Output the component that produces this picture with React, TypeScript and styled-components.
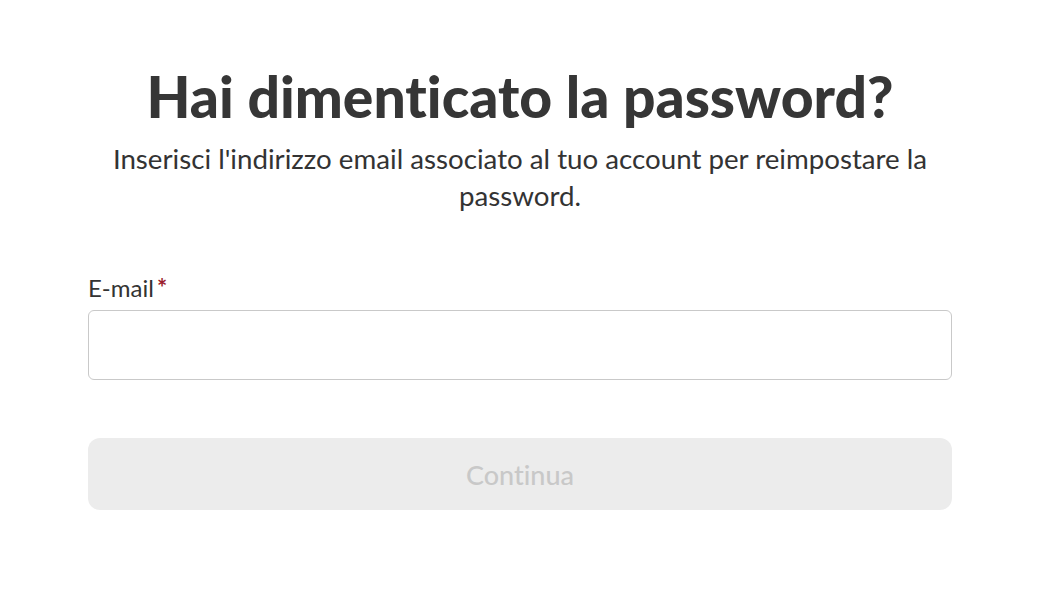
import React from "react";
import styled, { createGlobalStyle } from "styled-components";

const Global = createGlobalStyle`
  html, body { margin: 0; padding: 0; background: #ffffff; }
  body {
    font-family: Lato, "Noto Sans", sans-serif;
    color: #333333;
    font-variant-ligatures: none;
    font-feature-settings: "liga" 0, "clig" 0, "dlig" 0, "calt" 0;
  }
  button, input { font-feature-settings: "liga" 0, "clig" 0, "dlig" 0, "calt" 0; }
`;

const Page = styled.main`
  box-sizing: border-box;
  width: 1046px;
  padding: 61px 94px 0 88px;
`;

const Title = styled.h1`
  margin: 0;
  text-align: center;
  font-family: Lato, sans-serif;
  font-weight: 900;
  font-size: 57px;
  line-height: 70px;
  color: #363636;
`;

const Subtitle = styled.p`
  margin: 9px 0 0;
  padding: 0 18px;
  text-align: center;
  font-family: Lato, sans-serif;
  font-size: 27.7px;
  line-height: 37px;
  color: #333333;
`;

const Form = styled.form`
  display: flex;
  flex-direction: column;
  margin-top: 59px;
`;

const Label = styled.label`
  display: flex;
  align-items: baseline;
  gap: 3px;
  font-family: Lato, sans-serif;
  font-size: 24px;
  line-height: 30px;
  color: #333333;
`;

const Required = styled.span`
  color: #9b1c2e;
  font-weight: 700;
`;

const Input = styled.input`
  box-sizing: border-box;
  margin-top: 7px;
  width: 100%;
  height: 70px;
  border: 1px solid #c9c9c9;
  border-radius: 6px;
  background: #ffffff;
  padding: 0 16px;
  font-size: 22px;
  font-family: Lato, sans-serif;
  outline: none;
`;

const Button = styled.button`
  box-sizing: border-box;
  margin-top: 58px;
  width: 100%;
  height: 72px;
  border: none;
  border-radius: 12px;
  background: #ececec;
  color: #c8c8c8;
  font-family: Lato, sans-serif;
  font-size: 27px;
  font-weight: 500;
  cursor: not-allowed;
`;

export default function App() {
  return (
    <>
      <Global />
      <Page>
        <Title>Hai dimenticato la password?</Title>
        <Subtitle>
          Inserisci l'indirizzo email associato al tuo account per reimpostare la password.
        </Subtitle>
        <Form onSubmit={(e) => e.preventDefault()}>
          <Label htmlFor="email">
            E-mail<Required>*</Required>
          </Label>
          <Input id="email" type="email" />
          <Button type="submit" disabled>
            Continua
          </Button>
        </Form>
      </Page>
    </>
  );
}
